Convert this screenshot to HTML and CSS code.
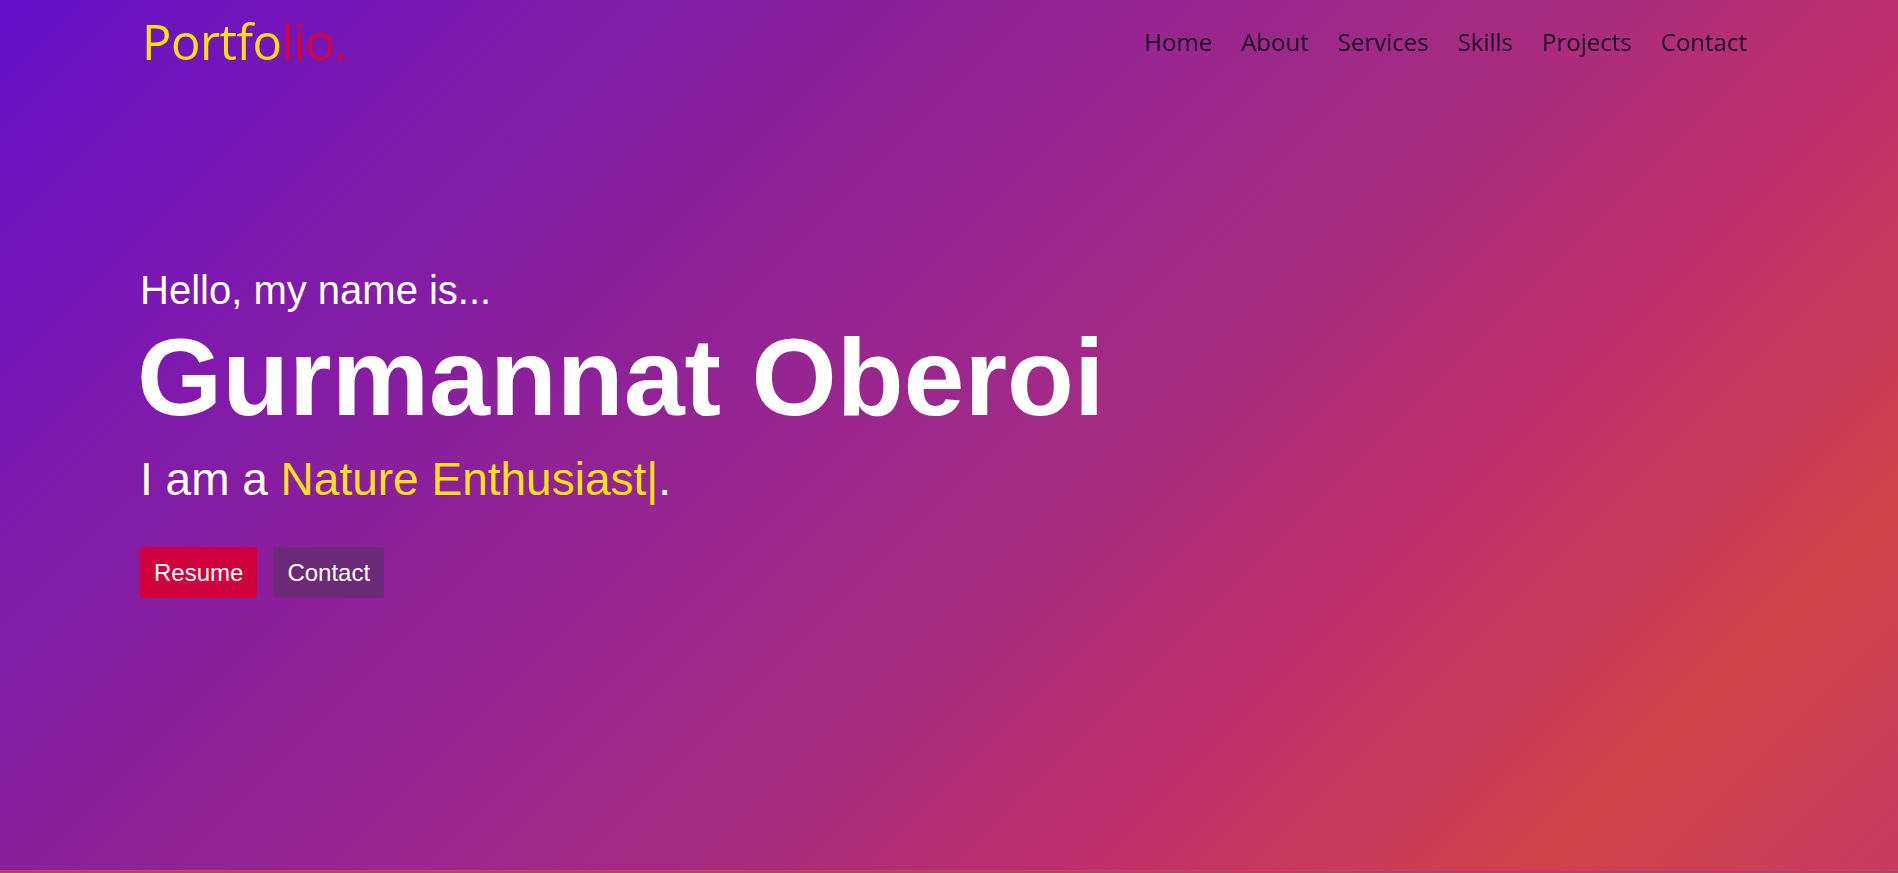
FILE: index.html
```html
<!DOCTYPE html>
<html lang="en">
<head>
<meta charset="utf-8">
<title>Portfolio</title>
<link rel="stylesheet" href="styles.css">
</head>
<body>
<header class="navbar">
  <div class="container nav-inner">
    <a class="logo" href="#">Portfo<span class="logo-accent">lio.</span></a>
    <nav>
      <ul class="menu">
        <li><a href="#">Home</a></li>
        <li><a href="#">About</a></li>
        <li><a href="#">Services</a></li>
        <li><a href="#">Skills</a></li>
        <li><a href="#">Projects</a></li>
        <li><a href="#">Contact</a></li>
      </ul>
    </nav>
  </div>
</header>
<section class="home">
  <div class="container home-content">
    <div class="text-1">Hello, my name is...</div>
    <h1 class="text-2">Gurmannat Oberoi</h1>
    <div class="text-3">I am a <span class="typing">Nature Enthusiast|</span>.</div>
    <div class="buttons">
      <a class="btn btn-resume" href="#">Resume</a>
      <a class="btn btn-contact" href="#">Contact</a>
    </div>
  </div>
</section>
</body>
</html>
```

FILE: styles.css
```css
* {
  margin: 0;
  padding: 0;
  box-sizing: border-box;
}

html, body {
  height: 100%;
}

body {
  background: #b04468;
  font-family: "Liberation Sans", Arial, sans-serif;
  overflow: hidden;
}

a {
  text-decoration: none;
}

.container {
  width: 100%;
  padding: 0 151px 0 140px;
}

.navbar {
  position: fixed;
  top: 0;
  left: 0;
  width: 100%;
  z-index: 10;
}

.nav-inner {
  height: 82px;
  display: flex;
  align-items: center;
  justify-content: space-between;
}

.logo {
  font-family: "Open Sans", sans-serif;
  font-size: 49px;
  font-weight: 500;
  color: #f6df12;
  letter-spacing: -0.5px;
  margin-left: 2px;
}

.logo-accent {
  color: #d2063e;
}

.menu {
  list-style: none;
  display: flex;
  gap: 29px;
}

.menu a {
  font-family: "Open Sans", sans-serif;
  font-size: 24px;
  font-weight: 500;
  color: #1c0822;
}

.home {
  height: 871px;
  padding-bottom: 6px;
  border-bottom: 1px solid #d63a62;
  display: flex;
  align-items: center;
  background: linear-gradient(135deg,
    #6610cc 0%,
    #8a1f9e 30%,
    #a12a88 52%,
    #c0306a 71%,
    #d4424a 87%,
    #c73c60 100%);
}

.home-content {
  color: #fff;
}

.text-1 {
  font-size: 40px;
  line-height: 1.2;
}

.text-2 {
  font-size: 109.5px;
  font-weight: 700;
  line-height: 1.05;
  margin-top: 6px;
  margin-left: -3px;
}

.text-3 {
  font-size: 46px;
  line-height: 1.3;
  margin-top: 15px;
}

.typing {
  color: #fbe01a;
}

.buttons {
  display: flex;
  gap: 16px;
  margin-top: 37px;
}

.btn {
  display: inline-block;
  font-size: 24px;
  line-height: 27px;
  padding: 12px 14px;
  color: #fff;
  border-radius: 3px;
}

.btn-resume {
  background: #cf023d;
}

.btn-contact {
  background: #6c2a78;
}
```
